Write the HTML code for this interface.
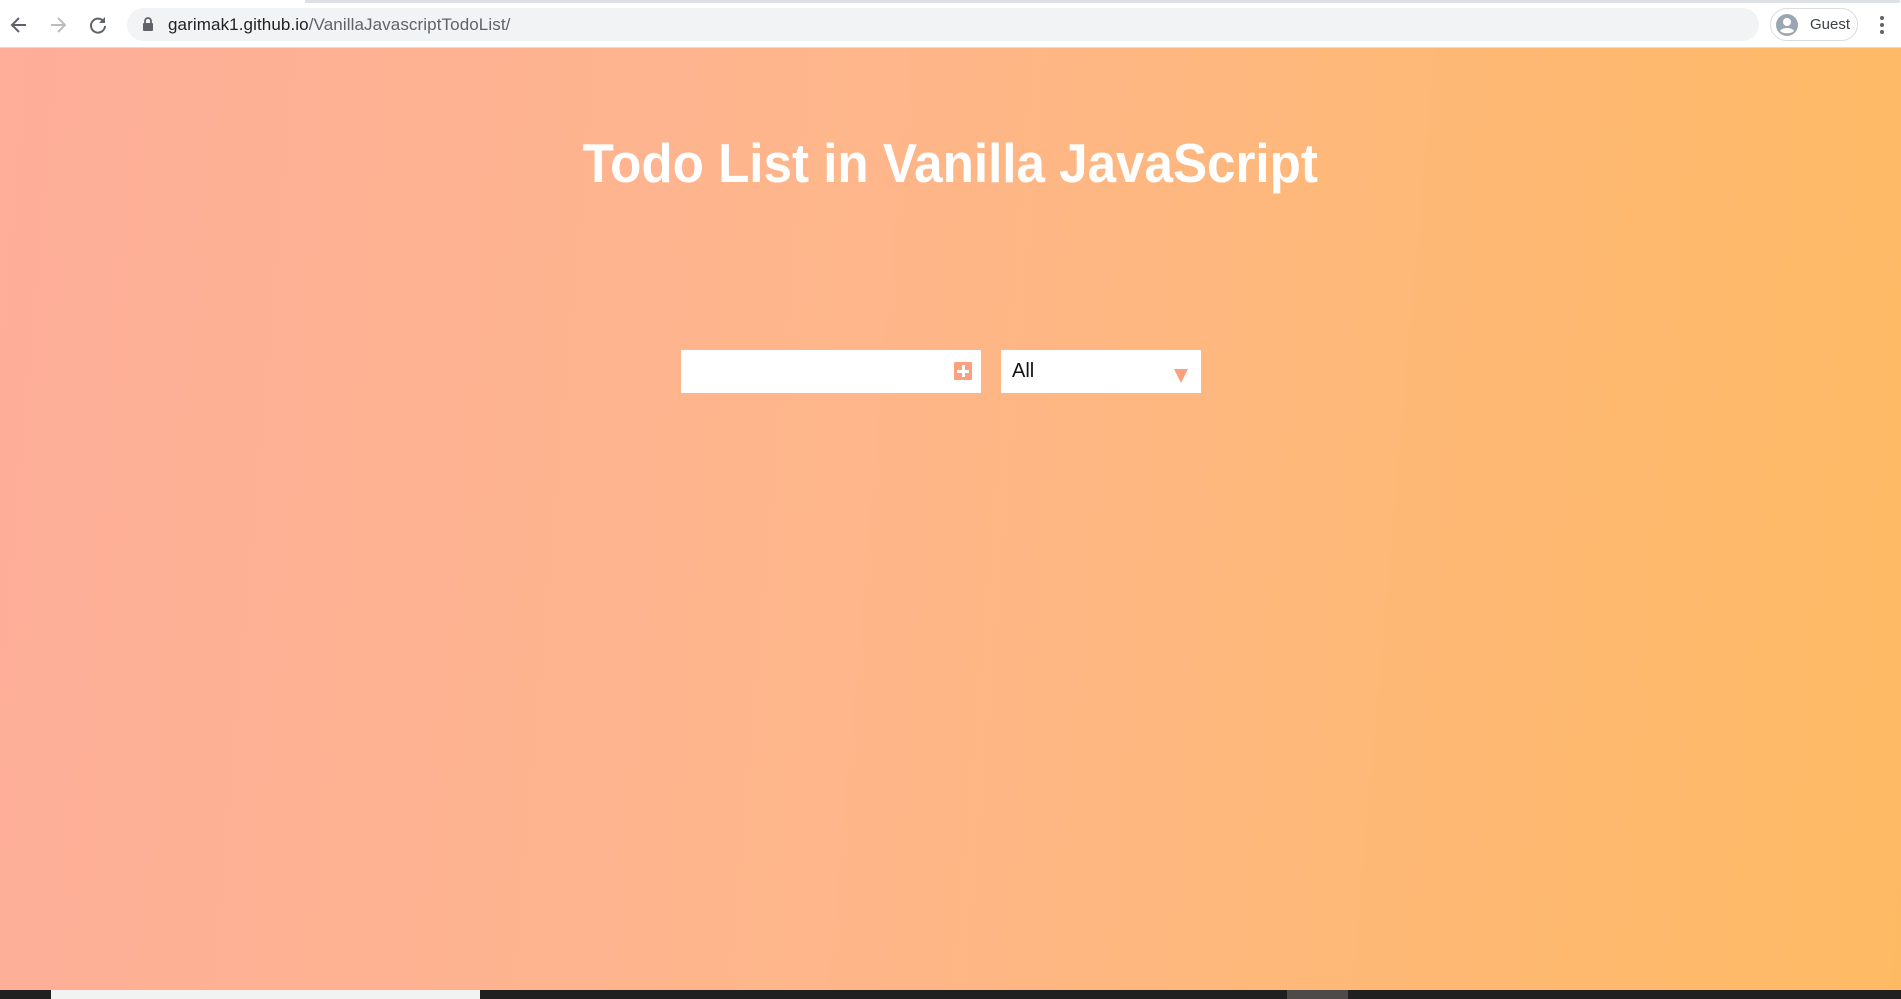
<!DOCTYPE html>
<html><head><meta charset="utf-8"><style>
html,body{margin:0;padding:0;width:1901px;height:999px;overflow:hidden;font-family:"Liberation Sans",sans-serif}
.top{position:absolute;left:0;top:0;width:1901px;height:48px;background:#fff;border-bottom:1px solid #dadce0;box-sizing:border-box}
.top .tabline{position:absolute;left:305px;top:0;width:1595px;height:3px;background:#dee1e6}
.url{position:absolute;left:127px;top:8px;width:1632px;height:33px;border-radius:17px;background:#f1f3f4}
.url span{position:absolute;left:41px;top:7px;font-size:17px;color:#202124;letter-spacing:0.1px}
.url span i{font-style:normal;color:#5f6368}
.guest{position:absolute;left:1770px;top:8px;width:88px;height:33px;border:1px solid #dadce0;border-radius:17px;box-sizing:border-box}
.guest span{position:absolute;left:39px;top:7px;font-size:15px;color:#3c4043}
.main{position:absolute;left:0;top:48px;width:1901px;height:942px;background:linear-gradient(95deg,#feae99 0%,#feb68a 45%,#feba63 100%)}
h1{position:absolute;left:0;top:80px;width:1901px;margin:0;text-align:center;color:#fff;font-size:55px;font-weight:bold;line-height:70px}
h1 span{display:inline-block;transform:scaleX(0.93)}
.inp{position:absolute;left:681px;top:302px;width:300px;height:43px;background:#fff}
.plus{position:absolute;left:273px;top:12px;width:18px;height:18px;background:#fda07f;border-radius:1px}
.plus:before{content:"";position:absolute;left:8px;top:3px;width:3px;height:12px;background:#fff}
.plus:after{content:"";position:absolute;left:3px;top:8px;width:12px;height:3px;background:#fff}
.sel{position:absolute;left:1001px;top:302px;width:200px;height:43px;background:#fff}
.sel span{position:absolute;left:11px;top:10px;font-size:20px;color:#111}
.sel b{position:absolute;left:173px;top:19px;width:0;height:0;border-left:7px solid transparent;border-right:7px solid transparent;border-top:14px solid #fda07f}
.task{position:absolute;left:0;top:990px;width:1901px;height:9px;background:#202020}
</style></head><body>
<div class="top"><div class="tabline"></div>
<svg style="position:absolute;left:8px;top:14px" width="22" height="22" viewBox="0 0 22 22"><path d="M18 11H5M11 4l-7 7 7 7" stroke="#5f6368" stroke-width="2" fill="none"/></svg>
<svg style="position:absolute;left:47px;top:14px" width="22" height="22" viewBox="0 0 22 22"><path d="M4 11h13M11 4l7 7-7 7" stroke="#babcbe" stroke-width="2" fill="none"/></svg>
<svg style="position:absolute;left:87px;top:14px" width="22" height="22" viewBox="0 0 22 22"><path d="M17 8A7 7 0 1 0 18 12" stroke="#5f6368" stroke-width="2" fill="none"/><path d="M18 3v6h-6z" fill="#5f6368"/></svg>
<div class="url"><svg style="position:absolute;left:15px;top:9px" width="12" height="15" viewBox="0 0 12 15"><path d="M3 6V4a3 3 0 0 1 6 0v2" stroke="#5f6368" stroke-width="1.8" fill="none"/><rect x="1" y="6" width="10" height="8" rx="1" fill="#5f6368"/></svg><span>garimak1.github.io<i>/VanillaJavascriptTodoList/</i></span></div>
<div class="guest"><svg style="position:absolute;left:4px;top:4px" width="24" height="24" viewBox="0 0 24 24"><circle cx="12" cy="12" r="11" fill="#9aa6b2"/><circle cx="12" cy="9" r="4" fill="#fff"/><path d="M5 18c2-4 12-4 14 0c-3 3-11 3-14 0z" fill="#fff"/></svg><span>Guest</span></div>
<svg style="position:absolute;left:1878px;top:14px" width="8" height="22" viewBox="0 0 8 22"><circle cx="4" cy="4" r="2" fill="#5f6368"/><circle cx="4" cy="11" r="2" fill="#5f6368"/><circle cx="4" cy="18" r="2" fill="#5f6368"/></svg>
</div>
<div class="main">
<h1><span>Todo List in Vanilla JavaScript</span></h1>
<div class="inp"><div class="plus"></div></div>
<div class="sel"><span>All</span><b></b></div>
</div>
<div class="task"><div style="position:absolute;left:51px;top:0;width:429px;height:9px;background:#f1f3f3"></div><div style="position:absolute;left:1287px;top:0;width:61px;height:9px;background:#4f4a4a"></div></div>
</body></html>
